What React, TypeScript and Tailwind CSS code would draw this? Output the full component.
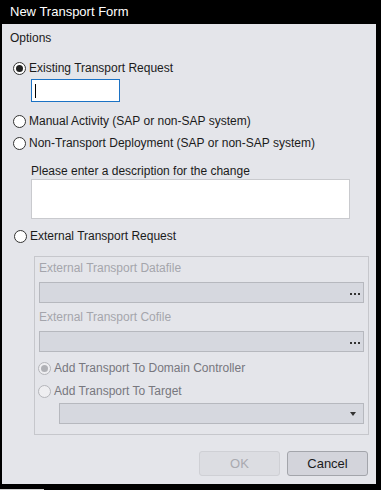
import React from 'react';

const Radio = ({ checked = false, disabled = false }: { checked?: boolean; disabled?: boolean }) => (
  <span
    className={`flex items-center justify-center w-[13px] h-[13px] rounded-full border shrink-0 ${
      disabled ? 'border-[#b4b5ba] bg-[#eeeef1]' : 'border-[#333] bg-white'
    }`}
  >
    {checked && <span className={`w-[7px] h-[7px] rounded-full ${disabled ? 'bg-[#b0b1b6]' : 'bg-[#222]'}`} />}
  </span>
);

const RadioRow = ({ label, checked, disabled, className = '' }: { label: string; checked?: boolean; disabled?: boolean; className?: string }) => (
  <div className={`flex items-center gap-[3px] h-[16px] ${className}`}>
    <Radio checked={checked} disabled={disabled} />
    <span className={disabled ? 'text-[#77777e]' : 'text-[#1b1b1b]'}>{label}</span>
  </div>
);

const FileField = ({ className = '' }: { className?: string }) => (
  <div className={`flex items-center justify-end h-[21px] w-[325px] bg-[#d6d8df] border border-[#b6b8be] pr-[3px] ${className}`}>
    <span className="flex gap-[2px] mt-[2px]">
      <span className="w-[2px] h-[2px] bg-[#333]" />
      <span className="w-[2px] h-[2px] bg-[#333]" />
      <span className="w-[2px] h-[2px] bg-[#333]" />
    </span>
  </div>
);

export default function App() {
  return (
    <div className="relative w-[381px] h-[490px] bg-black text-[12px]" style={{ fontFamily: '"Liberation Sans", Arial, sans-serif' }}>
      {/* title bar */}
      <div className="h-[24px] pl-[10px] flex items-center text-white text-[13px]">New Transport Form</div>

      {/* dialog body */}
      <div className="ml-[2px] w-[374px] h-[460px] bg-[#e4e5ea] flex flex-col">
        <div className="mt-[7px] ml-[8px] h-[14px] leading-[14px] text-[#1b1b1b]">Options</div>

        <RadioRow label="Existing Transport Request" checked className="mt-[15px] ml-[11px]" />
        <div className="mt-[3px] ml-[29px] w-[89px] h-[23px] bg-white border border-[#1b72c4] flex items-center pl-[3px]">
          <span className="w-[1px] h-[14px] bg-black" />
        </div>

        <RadioRow label="Manual Activity (SAP or non-SAP system)" className="mt-[11px] ml-[11px]" />
        <RadioRow label="Non-Transport Deployment (SAP or non-SAP system)" className="mt-[6px] ml-[11px]" />

        <div className="mt-[12px] ml-[29px] h-[16px] leading-[16px] text-[#1b1b1b]">Please enter a description for the change</div>
        <div className="ml-[29px] w-[319px] h-[40px] bg-white border border-[#c9cace]" />

        <RadioRow label="External Transport Request" className="mt-[9px] ml-[12px]" />

        {/* external group */}
        <div className="mt-[12px] ml-[32px] w-[335px] h-[179px] border border-[#c6c7cc] flex flex-col">
          <div className="mt-[3px] ml-[4px] h-[16px] leading-[16px] text-[#a4a5ac]">External Transport Datafile</div>
          <FileField className="mt-[6px] ml-[4px]" />
          <div className="mt-[6px] ml-[4px] h-[16px] leading-[16px] text-[#a4a5ac]">External Transport Cofile</div>
          <FileField className="mt-[6px] ml-[4px]" />
          <RadioRow label="Add Transport To Domain Controller" checked disabled className="mt-[8px] ml-[3px]" />
          <RadioRow label="Add Transport To Target" disabled className="mt-[7px] ml-[3px]" />
          <div className="mt-[4px] ml-[24px] w-[305px] h-[21px] bg-[#d6d8df] border border-[#b6b8be] flex items-center justify-end pr-[7px]">
            <svg width="6" height="4" viewBox="0 0 6 4">
              <path d="M0 0H6L3 4Z" fill="#333" />
            </svg>
          </div>
        </div>

        {/* buttons */}
        <div className="mt-[16px] pr-[8px] flex justify-end gap-[7px]">
          <div className="w-[81px] h-[25px] rounded-[3px] bg-[#dcdde2] border border-[#cfd0d5] flex items-center justify-center text-[#a9aab0] text-[13px]">OK</div>
          <div className="w-[81px] h-[25px] rounded-[3px] bg-[#d3d4db] border border-[#a3a5ab] flex items-center justify-center text-[#1b1b1b] text-[13px]">Cancel</div>
        </div>
      </div>

      <div className="mt-[5px] w-[44px] h-[1px] bg-[#cfcfcf]" />
    </div>
  );
}
